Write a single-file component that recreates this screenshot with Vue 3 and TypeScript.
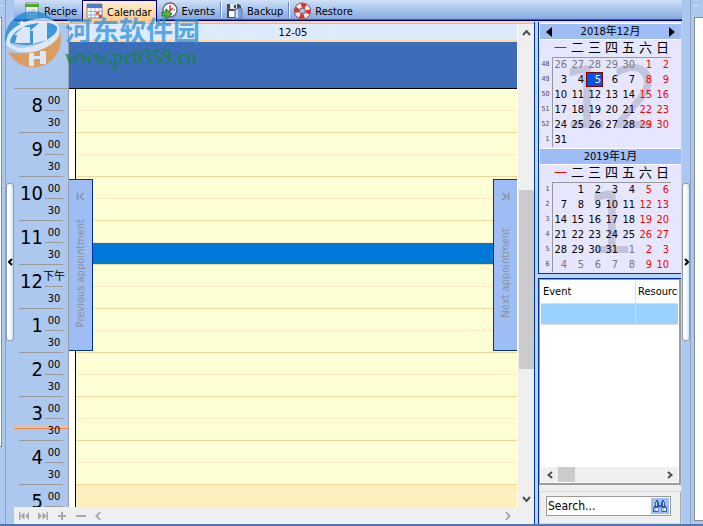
<script setup lang="ts">
import { ref } from 'vue'

interface MonthView {
  title: string
  big: string
  current: boolean
  weeks: { no: number; days: { n: number | null; out: boolean }[] }[]
}

const hours: { label: string; minute: string; late: boolean }[] = [
  '8', '9', '10', '11', '12', '1', '2', '3', '4', '5',
].map((label) => ({ label, minute: label === '12' ? '下午' : '00', late: label === '5' }))

const weekdays = ['一', '二', '三', '四', '五', '六', '日']

function buildMonth(
  title: string, big: string, current: boolean,
  weekNos: number[], lead: (number | null)[], length: number, trail: number,
): MonthView {
  const cells = [
    ...lead.map((n) => ({ n, out: true })),
    ...Array.from({ length }, (_, i) => ({ n: i + 1, out: false })),
    ...Array.from({ length: trail }, (_, i) => ({ n: i + 1, out: true })),
  ] as { n: number | null; out: boolean }[]
  while (cells.length < 42) cells.push({ n: null, out: true })
  return { title, big, current, weeks: weekNos.map((no, w) => ({ no, days: cells.slice(w * 7, w * 7 + 7) })) }
}

const months: MonthView[] = [
  buildMonth('2018年12月', '12', true, [48, 49, 50, 51, 52, 1], [26, 27, 28, 29, 30], 31, 0),
  buildMonth('2019年1月', '1', false, [1, 2, 3, 4, 5, 6], [null], 31, 10),
]

const search = ref('Search...')
</script>

<template>
  <div class="window">
    <aside class="edge left-edge"><div class="group-line"></div><div class="edge-panel"></div></aside>
    <div class="splitter split-left"><button class="grip" aria-label="Collapse left panel"><svg width="5" height="8" viewBox="0 0 5 8"><path d="M4 1 1 4l3 3" /></svg></button></div>

    <main class="center">
      <nav class="toolbar">
        <button class="tab recipe">
          <svg width="16" height="18" viewBox="0 0 16 18"><path d="M2 1h12v16H2z" fill="#fff" stroke="#888" /><path d="M1 2h14v3H1z" fill="#4eaa32" /><path d="M4 8h2m1 0h5M4 11h2m1 0h5M4 14h2m1 0h5" stroke="#999" /></svg>
          <span>Recipe</span>
        </button>
        <button class="tab active">
          <svg width="17" height="18" viewBox="0 0 17 18"><path d="M1 2h15v14H1z" fill="#fff" stroke="#7088bc" /><path d="M1 2h15v4H1z" fill="#5379c5" /><path d="M1 9.500h15M1 13h15M5 6v10m4-10v10m4-10v10" stroke="#9aabcf" /><path d="M10 10h3v3h-3z" fill="#d56b4a" /><path d="M13 13h3v3h-3z" fill="#c54b3c" /></svg>
          <span>Calendar</span>
        </button>
        <button class="tab">
          <svg width="17" height="18" viewBox="0 0 17 18"><circle cx="9" cy="8" r="7" fill="#fff" stroke="#666c7a" stroke-width="1.500" /><path d="M9 3v6l3-3" fill="none" stroke="#d43434" stroke-width="1.500" /><path d="M4 8h1m8 0h1m-5 4v1" stroke="#333" /><path d="M1 10h4V7l6 5-6 5v-3H1z" fill="#58b43b" stroke="#28762a" /></svg>
          <span>Events</span>
        </button>
        <i class="divider"></i>
        <button class="tab">
          <svg width="17" height="18" viewBox="0 0 17 18"><path d="M1 2h12l2 2v12H1z" fill="#444955" /><path d="M4 2h7v5H4z" fill="#dfe4eb" /><path d="M8 3h2v3H8z" fill="#444955" /><path d="M3 9h8v6H3z" fill="#fff" /><path d="M9 7q3.500-2 7 0v9q-3.500 2-7 0z" fill="#7f9fd4" stroke="#5d7bb3" /><path d="M11 8v8" stroke="#d2e1f8" stroke-width="2" /></svg>
          <span>Backup</span>
        </button>
        <i class="divider"></i>
        <button class="tab">
          <svg width="17" height="18" viewBox="0 0 17 18"><circle cx="8.500" cy="9" r="5.500" fill="none" stroke="#913036" stroke-width="6" /><circle cx="8.500" cy="9" r="5.500" fill="none" stroke="#f5f2f2" stroke-width="4.500" /><circle cx="8.500" cy="9" r="5.500" fill="none" stroke="#d9352b" stroke-width="4.500" stroke-dasharray="4.640 4" stroke-dashoffset="2" /></svg>
          <span>Restore</span>
        </button>
      </nav>

      <div class="work">
        <section class="scheduler">
          <div class="day-view">
            <div class="ruler">
              <div class="ruler-head"></div>
              <div v-for="h in hours" :key="h.label" class="hour">
                <i v-if="h.label === '3'" class="now"></i>
                <b>{{ h.label }}</b>
                <div class="minutes"><span>{{ h.minute }}</span><span>30</span></div>
              </div>
            </div>
            <div class="day">
              <div class="date">12-05</div>
              <div class="all-day"></div>
              <div class="slots">
                <template v-for="h in hours" :key="h.label">
                  <div class="slot" :class="{ late: h.late }"></div>
                  <div class="slot" :class="{ late: h.late, selected: h.label === '11' }"></div>
                </template>
              </div>
              <button class="jump previous">
                <svg width="9" height="9" viewBox="0 0 9 9"><path d="M1.500 1v7M7.500 1 4 4.500 7.500 8" /></svg>
                <span>Previous appointment</span>
              </button>
              <button class="jump next">
                <svg width="9" height="9" viewBox="0 0 9 9"><path d="M7.500 1v7M1.500 1 5 4.500 1.500 8" /></svg>
                <span>Next appointment</span>
              </button>
            </div>
            <div class="vscroll">
              <button aria-label="Scroll up"><svg width="9" height="6" viewBox="0 0 9 6"><path d="m1 5 3.500-4L8 5" /></svg></button>
              <div class="vtrack"><div class="vthumb"></div></div>
              <button aria-label="Scroll down"><svg width="9" height="6" viewBox="0 0 9 6"><path d="m1 1 3.500 4L8 1" /></svg></button>
            </div>
          </div>
          <div class="navigator">
            <button aria-label="First"><svg width="10" height="8" viewBox="0 0 10 8"><path d="M0 0h1.500v8H0zM5.500 0v8L1.500 4zM10 0v8L6 4z" /></svg></button>
            <button aria-label="Last"><svg width="10" height="8" viewBox="0 0 10 8"><path d="M8.500 0H10v8H8.500zM4.500 0v8l4-4zM0 0v8l4-4z" /></svg></button>
            <button aria-label="Add"><svg width="10" height="8" viewBox="0 0 10 8"><path d="M4 0h2v3h3v2H6v3H4V5H1V3h3z" /></svg></button>
            <button aria-label="Remove"><svg width="10" height="8" viewBox="0 0 10 8"><path d="M0 3h10v2H0z" /></svg></button>
            <button aria-label="Scroll left"><svg width="6" height="8" viewBox="0 0 6 8"><path d="M4 0h2L3 4l3 4H4L0 4z" /></svg></button>
            <button class="last" aria-label="Scroll right"><svg width="6" height="8" viewBox="0 0 6 8"><path d="M2 0H0l3 4-3 4h2l4-4z" /></svg></button>
          </div>
        </section>

        <aside class="side">
          <section class="date-box">
            <div v-for="m in months" :key="m.title" class="month">
              <header>
                <button v-if="m.current" aria-label="Previous month"><svg width="6" height="10" viewBox="0 0 6 10"><path d="M6 0v10L0 5z" /></svg></button>
                <span>{{ m.title }}</span>
                <button v-if="m.current" aria-label="Next month"><svg width="6" height="10" viewBox="0 0 6 10"><path d="M0 0v10l6-5z" /></svg></button>
              </header>
              <div class="month-body">
                <div class="big" aria-hidden="true">{{ m.big }}</div>
                <table>
                  <thead>
                    <tr><td class="wk"></td><th v-for="(d, i) in weekdays" :key="d" :class="{ red: i === 0 }">{{ d }}</th></tr>
                  </thead>
                  <tbody>
                    <tr v-for="w in m.weeks" :key="w.no">
                      <td class="wk">{{ w.no }}</td>
                      <td
                        v-for="(d, i) in w.days" :key="i"
                        :class="{ out: d.out && i < 5, red: i > 4, today: m.current && d.n === 5 && !d.out }"
                      >{{ d.n }}</td>
                    </tr>
                  </tbody>
                </table>
              </div>
            </div>
          </section>

          <section class="event-box">
            <div class="event-list">
              <table>
                <thead><tr><th>Event</th><th>Resource</th></tr></thead>
                <tbody><tr><td></td><td></td></tr></tbody>
              </table>
              <div class="hscroll">
                <button aria-label="Scroll left"><svg width="6" height="8" viewBox="0 0 6 8"><path d="M5 1 1.500 4 5 7" /></svg></button>
                <div class="hthumb"></div>
                <button aria-label="Scroll right"><svg width="6" height="8" viewBox="0 0 6 8"><path d="m1 1 3.500 3L1 7" /></svg></button>
              </div>
            </div>
            <div class="search-group">
              <div class="search">
                <input v-model="search" type="text" aria-label="Search" />
                <button aria-label="Find"><svg width="16" height="14" viewBox="0 0 16 14"><path d="M4 1h2v2h1v3h2V3h1V1h2v2h1v3l2 3v4H9.500V8h-3v5H1V9l2-3V3h1z" fill="#2f5f9f" /><path d="M2 9h4v3H2zM10 9h4v3h-4z" fill="#dcebff" /><path d="M3 9v3m8-3v3" stroke="#6f97cf" /><path d="M4.500 3v4m7-4v4" stroke="#b9d5ff" /></svg></button>
              </div>
            </div>
          </section>
        </aside>
      </div>
    </main>

    <div class="splitter split-right"><button class="grip" aria-label="Collapse right panel"><svg width="5" height="8" viewBox="0 0 5 8"><path d="m1 1 3 3-3 3" /></svg></button></div>
    <aside class="edge right-edge"><div class="group-line"></div><div class="edge-panel"></div></aside>

    <div class="watermark">
      <svg width="58" height="58" viewBox="0 0 58 58">
        <path d="M1 31A28 28 0 0 1 56 22Q34 42 1 31z" fill="#1b86d3" />
        <path d="M56 22A28 28 0 0 1 4 42Q33 48 56 22z" fill="#eb9034" />
        <path d="M3 36Q-1 21 21 12 43 4 53 13 62 27 41 38 20 48 3 36zM6 33q8 9 28 1 21-9 19-17Q46 9 24 15 6 22 6 33z" fill="#eaf3ff" fill-rule="evenodd" />
        <path d="M11 33l2-8h-3l9-8h7v16zM29 34V21h-3l10-9h7v18zM25 43h5v13h-5zM36 41h6v13h-6zM30 46h6v3h-6z" fill="#eaf3ff" />
        <path d="m18 10 1 2 3 1-3 1-1 3-1-3-3-1 3-1z" fill="#fff" />
      </svg>
      <div class="mark-text"><strong>河东软件园</strong><em>www.pc0359.cn</em></div>
    </div>
  </div>
</template>

<style>
body { margin: 0; overflow: hidden; }
</style>

<style scoped>
* { box-sizing: border-box; }
button { padding: 0; border: 0; background: none; font: inherit; color: inherit; display: flex; align-items: center; justify-content: center; }
svg { display: block; flex: none; }
table { border-collapse: collapse; border-spacing: 0; }
.window {
  position: relative; display: flex; height: 100vh; background: #adc8ee;
  border-bottom: 2px solid #4b78b8; color: #000; overflow: hidden;
  font: 11px/14px "DejaVu Sans Condensed", "Noto Sans CJK SC", sans-serif;
}
.edge { flex: none; display: flex; flex-direction: column; overflow: hidden; }
.left-edge { width: 6px; padding: 5px 3px 77px 0; border-right: 1px solid #8fa2bd; }
.right-edge { width: 13px; padding: 5px 0 3px 2px; border-left: 1px solid #8ba2c5; }
.group-line { flex: none; width: 6px; height: 12px; border-top: 1px solid #d5dfec; }
.edge-panel { flex: 1; background: #fff; border: 1px solid #858b94; }
.left-edge .edge-panel { border-left: 0; }
.right-edge .edge-panel { border-right: 0; margin-left: 1px; }
.splitter { flex: none; width: 8px; display: flex; align-items: center; }
.grip { width: 8px; height: 158px; border: 1px solid #929aa6; border-radius: 3px; background: linear-gradient(90deg, #fff 50%, #c7e2f2); }
.grip path { fill: none; stroke: #000; stroke-width: 2; }
.center { flex: 1; min-width: 0; display: flex; flex-direction: column; }
.toolbar { flex: none; display: flex; height: 24px; background: linear-gradient(#cfe0f8, #84aadf 19px, #00007d 20px, #00007d 21px, #ffc98a 21px, #ffdca8 23px, #a9c4eb 23px); }
.tab { height: 24px; padding: 0 5px 3px 4px; gap: 4px; }
.tab span { padding-top: 3px; }
.tab.recipe { padding-left: 10px; }
.tab.active { height: 22px; padding: 0 4px 1px 3px; border: 1px solid #00007d; border-bottom: 0; background: linear-gradient(#ffefd2, #ffc98a); }
.divider { width: 2px; height: 16px; margin-top: 2px; border-left: 1px solid #6286c0; border-right: 1px solid #fff; }
.work { flex: 1; min-height: 0; display: flex; }
.scheduler { flex: 1; min-width: 0; display: flex; flex-direction: column; background: #efefef; }
.day-view { flex: 1; min-height: 0; display: flex; overflow: hidden; }
.ruler { width: 55px; flex: none; background: #adc8ee; border-right: 1px solid #989da7; }
.ruler-head { height: 65px; border-bottom: 1px solid #9a9a9a; }
.hour { position: relative; display: flex; height: 44px; margin: 0 5px; border-bottom: 1px solid #9a9a9a; }
.hour b { position: relative; flex: none; width: 24px; padding-top: 6px; font-size: 20px; line-height: 20px; font-weight: 400; text-align: right; }
.minutes { position: relative; flex: none; width: 18px; margin-left: 2px; }
.minutes span { display: flex; justify-content: center; align-items: center; height: 22px; padding-top: 2px; white-space: nowrap; }
.minutes span:first-child { border-bottom: 1px solid #9a9a9a; }
.now { position: absolute; left: -5px; right: -5px; top: 27px; height: 5px; border-bottom: 1px solid #ff8040; background: linear-gradient(#adc8ee, #e3c4a4); }
.day { position: relative; flex: 1; min-width: 0; display: flex; flex-direction: column; background: #fff; }
.date { flex: none; height: 18px; padding-top: 2px; background: #ddebff; border-bottom: 2px solid #ffd9a0; text-align: center; }
.all-day { flex: none; height: 47px; background: #3d6cb9; border-bottom: 1px solid #000; }
.slots { flex: 1; min-height: 0; margin-left: 6px; border-left: 1px solid #000; overflow: hidden; background: #ffffd5; }
.slot { height: 22px; border-bottom: 1px solid #ffebc4; }
.slot:nth-child(even) { border-bottom-color: #f5d697; }
.slot.late { background: #fff0bd; }
.slot.selected { background: #0078d7; }
.jump { position: absolute; top: 155px; width: 24px; height: 172px; padding: 12px 0 0; flex-direction: column; justify-content: flex-start; gap: 18px; border: 1px solid #00309c; background: #9ebdf5; color: #8c8f98; }
.jump span { writing-mode: vertical-rl; transform: rotate(180deg); line-height: 12px; white-space: nowrap; }
.jump path { fill: none; stroke: #8c8f98; stroke-width: 1.5; }
.previous { left: 0; border-left: 0; }
.next { right: 0; border-right: 0; gap: 27px; }
.vscroll { width: 17px; flex: none; display: flex; flex-direction: column; padding-left: 1px; background: #efefef; border-left: 1px solid #fff; }
.vscroll button { height: 17px; }
.vscroll path, .hscroll path { fill: none; stroke: #505050; stroke-width: 2; }
.vtrack { flex: 1; display: grid; grid-template-rows: 149fr 178fr 121fr; }
.vthumb { grid-row: 2; width: 15px; background: #cbcbcb; }
.navigator { flex: none; height: 17px; display: flex; align-items: center; gap: 9px; padding: 0 6px 0 5px; background: #efefef; }
.navigator path { fill: #a9a9a9; }
.navigator .last { margin-left: auto; margin-right: 17px; }
.side { flex: none; width: 148px; padding: 0 1px 0 3px; background: #b9d5f5; border-left: 1px solid #00309c; }
.side { display: flex; flex-direction: column; gap: 4px; margin-top: -2px; }
.date-box { flex: none; padding: 1px 0 0 1px; border: 1px solid #00309c; border-width: 0 0 1px 1px; background: #e6e6ff; }
.month { height: 125px; border-top: 1px solid #fff; }
.month header { display: flex; align-items: center; justify-content: space-between; height: 16px; padding: 0 6px; background: #9ebdf5; border-bottom: 1px solid #fff; }
.month header span { flex: 1; text-align: center; }
.month-body { position: relative; }
.month table { position: relative; table-layout: fixed; width: 131px; }
.month th { width: 17px; height: 17px; padding: 0; font-size: 13px; line-height: 14px; font-weight: 400; border-bottom: 1px solid #999; }
.month td { width: 17px; height: 15px; padding: 0 2px 0 0; line-height: 13px; text-align: right; }
.month td.wk { width: 12px; padding: 0 2px 0 0; font-size: 7px; color: #444; }
.month tbody td.wk { border-right: 1px solid #999; }
.month td.out { color: #777; }
.month .red { color: #f00; }
.month td.today { background: #0055e5; color: #fff; outline: 1px solid #800000; outline-offset: -1px; }
.big { position: absolute; left: 0; right: 0; top: 15px; text-align: center; font-size: 86px; line-height: 86px; color: #c3c3dc; }
.event-box { flex: 1; min-height: 0; display: flex; flex-direction: column; background: #efefef; border: 1px solid #00309c; border-width: 1px 0 0 1px; }
.event-list { flex: 1; min-height: 0; display: flex; flex-direction: column; justify-content: space-between; overflow: hidden; padding: 1px; border: 1px solid #999da5; border-width: 1px 2px 2px 1px; background: #fff; }
.event-list table { table-layout: fixed; width: 100%; }
.event-list th { height: 22px; padding: 0 0 0 2px; font-weight: 400; text-align: left; overflow: hidden; white-space: nowrap; border-right: 1px solid #ddd; border-bottom: 1px solid #ddd; }
.event-list th:first-child { width: 69%; }
.event-list th:last-child, .event-list td:last-child { border-right: 0; }
.event-list td { height: 21px; background: #99d1ff; border-right: 1px solid #ddd; border-bottom: 1px solid #ddd; }
.hscroll { display: flex; height: 15px; background: #efefef; flex: none; }
.hscroll button { width: 17px; }
.hscroll button:last-child { margin-left: auto; }
.hthumb { width: 17px; background: #cbcbcb; }
.search-group { flex: none; margin-top: 6px; padding: 4px 9px 7px 6px; border: 1px solid #d9d9d9; border-right-color: #aaa; }
.search { display: flex; height: 20px; padding: 1px; border: 1px solid #999; background: #fff; }
.search input { flex: 1; min-width: 0; padding: 0; border: 0; outline: 0; background: transparent; font: inherit; font-size: 12px; }
.search button { width: 18px; background: #9ebdf5; }
.watermark { position: absolute; left: 4px; top: 10px; display: flex; opacity: 0.75; pointer-events: none; }
.mark-text { padding: 6px 0 0 3px; }
.mark-text strong { display: block; color: #2c91df; font: 700 27px/28px "Noto Sans CJK SC", sans-serif; white-space: nowrap; }
.mark-text em { display: block; color: #1b8444; font: normal 700 20px/26px "Liberation Serif", serif; }
</style>
